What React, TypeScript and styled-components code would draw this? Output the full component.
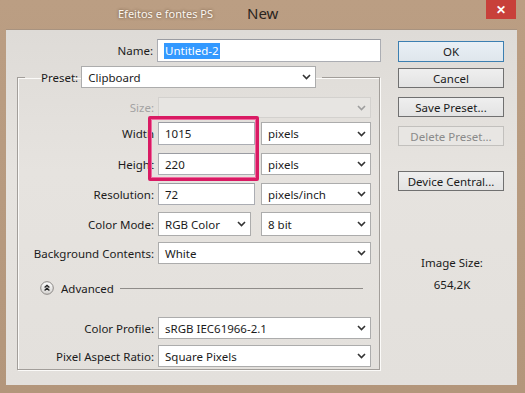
import React from "react";
import styled, { createGlobalStyle } from "styled-components";

const GlobalStyle = createGlobalStyle`
  html, body {
    margin: 0;
    padding: 0;
    background: #b79a7f;
  }
  body {
    font-family: "Noto Sans", "Open Sans", sans-serif;
    font-size: 11.5px;
    color: #1b1b1b;
  }
`;

const Frame = styled.div`
  width: 525px;
  height: 393px;
  box-sizing: border-box;
  padding: 0 8px 8px 6px;
  background: linear-gradient(#bb9e83, #b3967b);
  display: flex;
  flex-direction: column;
`;

const TitleBar = styled.div`
  height: 29px;
  display: flex;
  align-items: flex-start;
`;

const AppCaption = styled.span`
  margin: 6px 0 0 112px;
  font-size: 11px;
  color: #fbf6f0;
  text-shadow: 0 0 3px rgba(60, 40, 20, 0.7);
`;

const DialogCaption = styled.span`
  margin: 3px 0 0 34px;
  font-size: 15px;
  color: #2a2420;
`;

const CloseButton = styled.div`
  margin-left: auto;
  margin-right: 1px;
  width: 30px;
  height: 19px;
  background: #c8403a;
  color: #fff;
  font-size: 12px;
  font-weight: bold;
  display: flex;
  align-items: center;
  justify-content: center;
`;

const Client = styled.div`
  flex: 1;
  background: linear-gradient(#dedbd7, #e6e3df 40%, #e3e0dc);
  display: flex;
  padding: 9px 0 0 11px;
  border-top: 1px solid #a89380;
`;

const FormColumn = styled.div`
  width: 364px;
  display: flex;
  flex-direction: column;
`;

const Row = styled.div<{ $top?: number }>`
  display: grid;
  grid-template-columns: 136px 1fr;
  column-gap: 4px;
  align-items: center;
  margin-top: ${(p) => p.$top ?? 0}px;
`;

const Label = styled.span<{ $disabled?: boolean }>`
  text-align: right;
  white-space: nowrap;
  color: ${(p) => (p.$disabled ? "#a3a3a3" : "#1b1b1b")};
`;

const TextBox = styled.div<{ $h?: number }>`
  height: ${(p) => p.$h ?? 22}px;
  box-sizing: border-box;
  background: #fff;
  border: 1px solid #abadb3;
  border-top-color: #9a9ca2;
  padding: 0 0 0 6px;
  display: flex;
  align-items: center;
`;

const Selected = styled.span`
  background: #3399ff;
  color: #fff;
  padding: 0 1px;
  line-height: 16px;
`;

const Dropdown = styled.div<{ $disabled?: boolean; $w?: number; $h?: number }>`
  height: ${(p) => p.$h ?? 22}px;
  width: ${(p) => (p.$w ? `${p.$w}px` : "auto")};
  box-sizing: border-box;
  background: ${(p) => (p.$disabled ? "#e7e5e2" : "#fff")};
  border: 1px solid ${(p) => (p.$disabled ? "#d3d1ce" : "#acacac")};
  padding: 0 0 0 6px;
  display: flex;
  align-items: center;
  justify-content: space-between;
`;

const Chevron = styled.svg<{ $disabled?: boolean }>`
  width: 9px;
  height: 6px;
  margin-right: 4px;
  color: ${(p) => (p.$disabled ? "#9e9e9e" : "#333")};
`;

const Arrow = ({ disabled }: { disabled?: boolean }) => (
  <Chevron $disabled={disabled} viewBox="0 0 9 6">
    <path d="M1 1 L4.5 4.5 L8 1" fill="none" stroke="currentColor" strokeWidth="1.6" />
  </Chevron>
);

const Select = ({
  children,
  disabled,
  w,
  h,
}: {
  children?: React.ReactNode;
  disabled?: boolean;
  w?: number;
  h?: number;
}) => (
  <Dropdown $disabled={disabled} $w={w} $h={h}>
    <span>{children}</span>
    <Arrow disabled={disabled} />
  </Dropdown>
);

const Pair = styled.div<{ $first: number }>`
  display: grid;
  grid-template-columns: ${(p) => p.$first}px 1fr;
  column-gap: ${(p) => (p.$first === 97 ? 6 : 10)}px;
`;

const Group = styled.fieldset`
  margin: 4px 0 0 0;
  padding: 0 8px 2px 0;
  width: 363px;
  box-sizing: border-box;
  border: 1px solid #a29e9a;
  box-shadow: inset 1px 1px 0 #fbfaf8, 1px 1px 0 #fbfaf8;
  min-width: 0;
`;

const Legend = styled.legend`
  margin-left: 7px;
  padding: 0 6px 0 16px;
  display: flex;
  align-items: center;
  gap: 3px;
`;

const SizeBlock = styled.div`
  position: relative;
  display: flex;
  flex-direction: column;
  gap: 8px;
  margin-top: 4px;
`;

const Highlight = styled.div`
  position: absolute;
  left: 130px;
  top: -6px;
  width: 111px;
  height: 65px;
  box-sizing: border-box;
  border: 3px solid #d91a63;
  border-radius: 2px;
  box-shadow: inset 0 0 0 1px #f06aa0;
  pointer-events: none;
`;

const AdvancedRow = styled.div`
  display: flex;
  align-items: center;
  margin: 16px 0 0 22px;
  height: 16px;
`;

const AdvancedIcon = styled.svg`
  width: 14px;
  height: 14px;
  margin-right: 7px;
`;

const AdvancedText = styled.span`
  margin-right: 6px;
`;

const Rule = styled.div`
  flex: 1;
  height: 1px;
  background: #8f8c89;
  margin-right: 8px;
`;

const ButtonColumn = styled.div`
  margin: 2px 0 0 17px;
  width: 106px;
  display: flex;
  flex-direction: column;
  align-items: stretch;
`;

const Button = styled.button<{ $primary?: boolean; $top?: number }>`
  height: ${(p) => (p.$primary ? 21 : 20)}px;
  margin-top: ${(p) => p.$top ?? 0}px;
  padding: 0;
  font-family: inherit;
  font-size: 11.5px;
  color: #1b1b1b;
  border: 1px solid ${(p) => (p.$primary ? "#3c7fb1" : "#707070")};
  border-radius: 0;
  background: ${(p) =>
    p.$primary
      ? "linear-gradient(#e9f0f6, #dfe6ec)"
      : "linear-gradient(#efefef, #e3e3e3)"};
  &:disabled {
    color: #8a8a8a;
    border-color: #c2c0bd;
    background: #e8e6e3;
  }
`;

const SizeInfo = styled.div`
  margin-top: 64px;
  display: flex;
  flex-direction: column;
  align-items: center;
  gap: 7px;
  padding-left: 2px;
`;

export default function App() {
  return (
    <>
      <GlobalStyle />
      <Frame>
        <TitleBar>
          <AppCaption>Efeitos e fontes PS</AppCaption>
          <DialogCaption>New</DialogCaption>
          <CloseButton>✕</CloseButton>
        </TitleBar>
        <Client>
          <FormColumn>
            <Row>
              <Label>Name:</Label>
              <TextBox $h={23}>
                <Selected>Untitled-2</Selected>
              </TextBox>
            </Row>
            <Group>
              <Legend>
                <Label>Preset:</Label>
                <Select w={235}>Clipboard</Select>
              </Legend>
              <Row $top={9}>
                <Label $disabled>Size:</Label>
                <Select disabled h={21} />
              </Row>
              <SizeBlock>
                <Row>
                  <Label>Width</Label>
                  <Pair $first={97}>
                    <TextBox $h={23}>1015</TextBox>
                    <Select h={23}>pixels</Select>
                  </Pair>
                </Row>
                <Row>
                  <Label>Height</Label>
                  <Pair $first={97}>
                    <TextBox $h={22}>220</TextBox>
                    <Select>pixels</Select>
                  </Pair>
                </Row>
                <Highlight />
              </SizeBlock>
              <Row $top={8}>
                <Label>Resolution:</Label>
                <Pair $first={97}>
                  <TextBox>72</TextBox>
                  <Select>pixels/inch</Select>
                </Pair>
              </Row>
              <Row $top={7}>
                <Label>Color Mode:</Label>
                <Pair $first={93}>
                  <Select h={24}>RGB Color</Select>
                  <Select h={24}>8 bit</Select>
                </Pair>
              </Row>
              <Row $top={6}>
                <Label>Background Contents:</Label>
                <Select>White</Select>
              </Row>
              <AdvancedRow>
                <AdvancedIcon viewBox="0 0 14 14">
                  <defs>
                    <linearGradient id="adv" x1="0" y1="0" x2="0" y2="1">
                      <stop offset="0" stopColor="#ffffff" />
                      <stop offset="1" stopColor="#d4d2cf" />
                    </linearGradient>
                  </defs>
                  <circle cx="7" cy="7" r="6.3" fill="url(#adv)" stroke="#8a8784" strokeWidth="1" />
                  <path d="M4.6 6.6 L7 4.4 L9.4 6.6 M4.6 9.4 L7 7.2 L9.4 9.4" fill="none" stroke="#222" strokeWidth="1.3" />
                </AdvancedIcon>
                <AdvancedText>Advanced</AdvancedText>
                <Rule />
              </AdvancedRow>
              <Row $top={21}>
                <Label>Color Profile:</Label>
                <Select>sRGB IEC61966-2.1</Select>
              </Row>
              <Row $top={6}>
                <Label>Pixel Aspect Ratio:</Label>
                <Select>Square Pixels</Select>
              </Row>
            </Group>
          </FormColumn>
          <ButtonColumn>
            <Button $primary>OK</Button>
            <Button $top={6}>Cancel</Button>
            <Button $top={9}>Save Preset...</Button>
            <Button $top={9} disabled>
              Delete Preset...
            </Button>
            <Button $top={25}>Device Central...</Button>
            <SizeInfo>
              <span>Image Size:</span>
              <span>654,2K</span>
            </SizeInfo>
          </ButtonColumn>
        </Client>
      </Frame>
    </>
  );
}
